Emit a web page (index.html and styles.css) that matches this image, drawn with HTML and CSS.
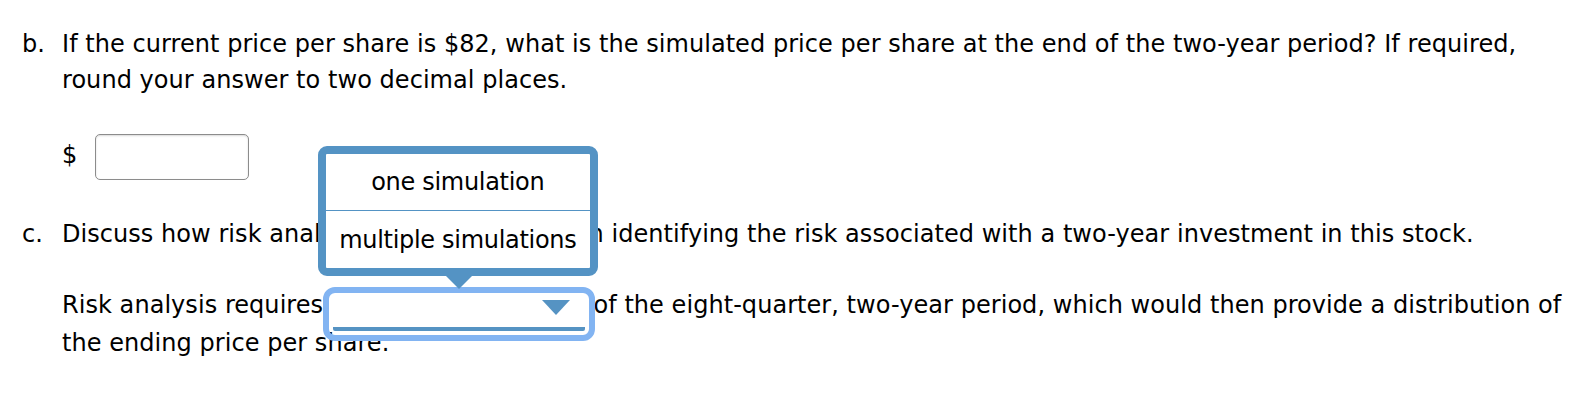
FILE: index.html
```html
<!DOCTYPE html>
<html>
<head>
<meta charset="utf-8">
<link rel="stylesheet" href="styles.css">
</head>
<body>
<div class="parts">
  <div class="part part-b">
    <span class="label">b.</span>
    <div class="body">
      <p class="q">If the current price per share is $82, what is the simulated price per share at the end of the two-year period? If required, round your answer to two decimal places.</p>
      <div class="answer">
        <span class="dollar">$</span>
        <input class="num" type="text">
      </div>
    </div>
  </div>
  <div class="part part-c">
    <span class="label">c.</span>
    <div class="body">
      <p class="q">Discuss how risk analysis would be helpful in identifying the risk associated with a two-year investment in this stock.</p>
      <p class="fill">Risk analysis requires <span class="select"><span class="caret"></span><span class="menu"><span class="opt">one simulation</span><span class="opt">multiple simulations</span><span class="pointer"></span></span></span> of the eight-quarter, two-year period, which would then provide a distribution of the ending price per share.</p>
    </div>
  </div>
</div>
</body>
</html>
```

FILE: styles.css
```css
html, body {
  margin: 0;
  padding: 0;
  background: #fff;
}
body {
  font-family: "DejaVu Sans", Verdana, sans-serif;
  font-size: 24px;
  letter-spacing: 0.05px;
  color: #000;
  padding: 26px 4px 0 22px;
}
.parts {
  display: flex;
  flex-direction: column;
}
.part {
  display: flex;
}
.label {
  width: 40px;
  flex: none;
  line-height: 36px;
}
.body {
  flex: 1;
}
.q {
  margin: 0;
  line-height: 36px;
}
.answer {
  display: flex;
  align-items: center;
  gap: 18px;
  margin: 36px 0 0 0;
  height: 46px;
}
.dollar {
  position: relative;
  top: -2px;
}
.num {
  width: 154px;
  height: 46px;
  box-sizing: border-box;
  border: 1px solid #8c8c8c;
  border-radius: 5px;
  box-shadow: inset 0 1px 2px rgba(0,0,0,0.15);
  margin: 0;
  padding: 0;
}
.part-c {
  margin-top: 36px;
}
.fill {
  margin: 34px 0 0;
  line-height: 38px;
}
.select {
  position: relative;
  top: 8px;
  display: inline-block;
  box-sizing: border-box;
  width: 252px;
  height: 34px;
  vertical-align: -10px;
  margin: 0 1px 0 2px;
  border-bottom: 4px solid #5593c3;
  outline: 6px solid #82b4f2;
  outline-offset: 4px;
  border-radius: 2px;
}
.caret {
  position: absolute;
  right: 15px;
  top: 3px;
  width: 0;
  height: 0;
  border-left: 14px solid transparent;
  border-right: 14px solid transparent;
  border-top: 15px solid #5593c3;
}
.menu {
  position: absolute;
  left: -15px;
  top: -151px;
  width: 280px;
  box-sizing: border-box;
  border: 8px solid #5493c4;
  border-radius: 9px;
  background: #fff;
  display: flex;
  flex-direction: column;
  letter-spacing: -0.3px;
}
.opt {
  display: block;
  height: 56px;
  line-height: 56px;
  text-align: center;
  white-space: nowrap;
}
.opt + .opt {
  border-top: 1px solid #5493c4;
  height: 57px;
  line-height: 58px;
}
.pointer {
  position: absolute;
  left: 120px;
  bottom: -21px;
  width: 0;
  height: 0;
  border-left: 13px solid transparent;
  border-right: 13px solid transparent;
  border-top: 13px solid #5493c4;
}
```
